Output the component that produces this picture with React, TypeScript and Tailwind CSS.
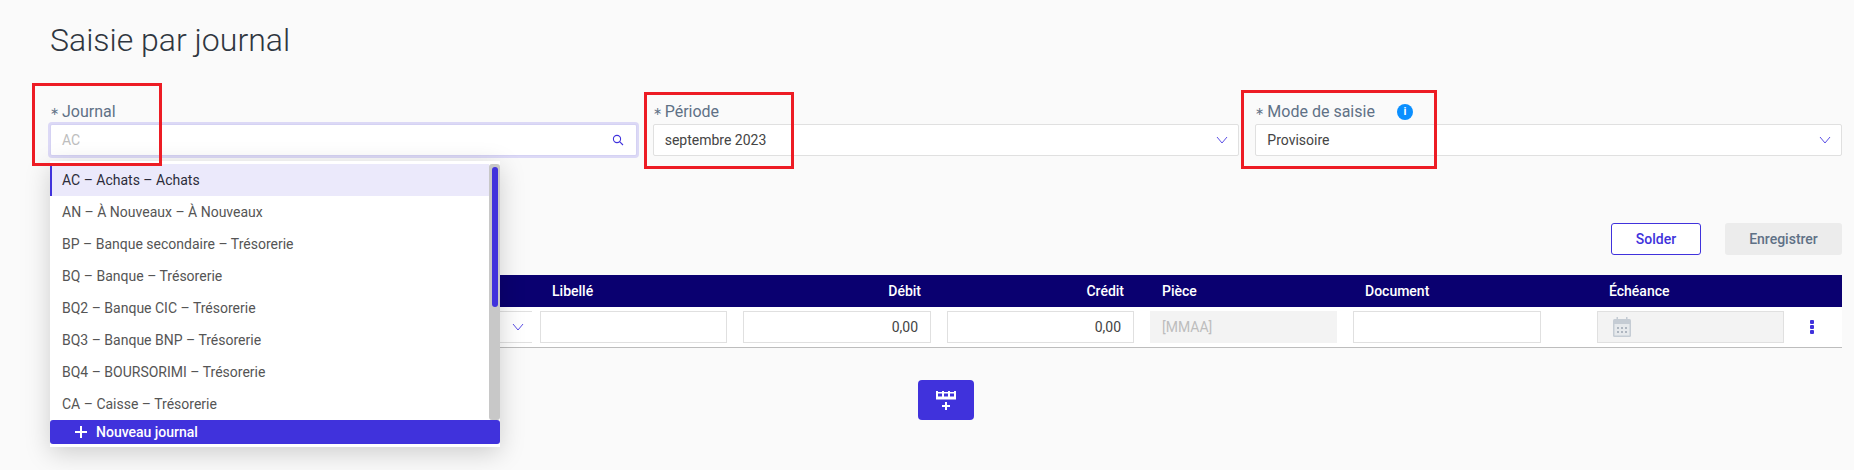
import React from "react";

const journals = [
  "AC – Achats – Achats",
  "AN – À Nouveaux – À Nouveaux",
  "BP – Banque secondaire – Trésorerie",
  "BQ – Banque – Trésorerie",
  "BQ2 – Banque CIC – Trésorerie",
  "BQ3 – Banque BNP – Trésorerie",
  "BQ4 – BOURSORIMI – Trésorerie",
  "CA – Caisse – Trésorerie",
];

const gridCols = "grid grid-cols-[482px_203px_204px_203px_203px_204px_40px_203px_1fr]";

function Chevron() {
  return (
    <svg width="12" height="8" viewBox="0 0 12 8" fill="none" stroke="#5b4fe6" strokeWidth="1">
      <path d="M1 1l5 6 5-6" />
    </svg>
  );
}

function SearchIcon() {
  return (
    <svg width="12" height="12" viewBox="0 0 12 12" fill="none" stroke="#4032dc" strokeWidth="1.1">
      <circle cx="5" cy="5" r="3.6" />
      <path d="M7.6 7.6L11 11" />
    </svg>
  );
}

function Label({ text }: { text: string }) {
  return (
    <div className="flex items-center h-6 text-[16px] text-[#5f7186]">
      <span className="w-3 text-[11px] text-[#5f7186]">∗</span>
      <span>{text}</span>
    </div>
  );
}

function SelectField({ label, value, info }: { label: string; value: string; info?: boolean }) {
  return (
    <div>
      <div className="flex items-center">
        <Label text={label} />
        {info && (
          <span className="ml-[22px] flex h-4 w-4 items-center justify-center rounded-full bg-[#0a8fff] text-[11px] font-bold text-white">
            i
          </span>
        )}
      </div>
      <div className="flex h-8 items-center justify-between rounded-[2px] border border-[#e0e0e0] bg-white pl-[11px] pr-[10px] text-[14px] text-[#444]">
        <span>{value}</span>
        <Chevron />
      </div>
    </div>
  );
}

function JournalField() {
  return (
    <div className="relative">
      <Label text="Journal" />
      <div className="flex h-8 items-center justify-between rounded-[2px] border border-[#d5d2f3] bg-white pl-[11px] pr-3 text-[14px] text-[#bdbdbd] ring-2 ring-[#dcd9f6]">
        <span>AC</span>
        <SearchIcon />
      </div>

      {/* dropdown */}
      <div className="absolute left-0 top-[61px] z-10 w-[450px] bg-white pt-[3px] pb-[3px] shadow-[0_6px_24px_rgba(0,0,0,0.18)]">
        <div className="flex">
          <div className="flex-1">
            {journals.map((j, i) => (
              <div
                key={j}
                className={
                  i === 0
                    ? "flex h-8 items-center border-l-2 border-[#4032dc] bg-[#ebe9fb] pl-[10px] text-[14px] text-[#2c2c3a]"
                    : "flex h-8 items-center pl-3 text-[14px] text-[#555]"
                }
              >
                {j}
              </div>
            ))}
          </div>
          <div className="flex h-64 w-[11px] justify-center rounded-[3px] bg-[#c8c8c8] pt-[3px]">
            <div className="h-[140px] w-[6px] rounded-[3px] bg-[#4032dc]" />
          </div>
        </div>
        <div className="flex h-6 items-center rounded-[3px] bg-[#4032dc] pl-6 text-[14px] font-medium text-white">
          <svg className="mr-2" width="14" height="14" viewBox="0 0 14 14" fill="none" stroke="white" strokeWidth="2">
            <path d="M7 1v12M1 7h12" />
          </svg>
          Nouveau journal
        </div>
      </div>
    </div>
  );
}

function CalendarIcon() {
  return (
    <svg width="18" height="20" viewBox="0 0 18 20">
      <rect x="3.5" y="0" width="1.5" height="3" fill="#c5ccd4" />
      <rect x="13" y="0" width="1.5" height="3" fill="#c5ccd4" />
      <rect x="0" y="2" width="18" height="18" rx="1.5" fill="#c5ccd4" />
      <rect x="1.5" y="7" width="15" height="11.5" fill="#e6e9ec" />
      <g fill="#aeb6c0">
        <rect x="4" y="10" width="2" height="2" />
        <rect x="8" y="10" width="2" height="2" />
        <rect x="12" y="10" width="2" height="2" />
        <rect x="4" y="14" width="2" height="2" />
        <rect x="8" y="14" width="2" height="2" />
        <rect x="12" y="14" width="2" height="2" />
      </g>
    </svg>
  );
}

function AddRowIcon() {
  return (
    <svg width="20" height="20" viewBox="0 0 20 20" fill="white">
      <g transform="translate(0 1)">
        <rect x="0" y="5.5" width="20" height="3" />
        <rect x="0" y="1" width="20" height="1.5" />
        <rect x="0" y="0" width="2" height="8" />
        <rect x="6" y="0" width="2" height="8" />
        <rect x="12" y="0" width="2" height="8" />
        <rect x="18" y="0" width="2" height="8" />
      </g>
      <path d="M9 12h2v3h3v2h-3v3H9v-3H6v-2h3z" />
    </svg>
  );
}

function RedBox({ className }: { className: string }) {
  return <div className={`pointer-events-none absolute z-20 border-[3px] border-[#ed1c24] ${className}`} />;
}

export default function App() {
  return (
    <div className="relative min-h-screen bg-[#fafafa] pl-[50px] pr-3 pt-5 font-[Roboto,sans-serif]">
      <h1 className="h-10 text-[32px] leading-10 font-light text-[#2f3640]">Saisie par journal</h1>

      <div className="mt-10 grid grid-cols-3 gap-4">
        <JournalField />
        <SelectField label="Période" value="septembre 2023" />
        <SelectField label="Mode de saisie" value="Provisoire" info />
      </div>

      <div className="mt-[67px] flex justify-end gap-6">
        <button className="h-8 w-[90px] rounded-[3px] border border-[#4032dc] bg-white text-[14px] font-medium text-[#4032dc]">
          Solder
        </button>
        <button className="h-8 w-[117px] rounded-[3px] bg-[#ececec] text-[14px] font-medium text-[#5f7186]">
          Enregistrer
        </button>
      </div>

      <div className="mt-5">
        <div className={`${gridCols} h-8 items-center bg-[#0a0070] text-[14px] font-medium text-white`}>
          <div />
          <div className="pl-5">Libellé</div>
          <div className="pr-[18px] text-right">Débit</div>
          <div className="pr-[18px] text-right">Crédit</div>
          <div className="pl-5">Pièce</div>
          <div className="pl-5">Document</div>
          <div />
          <div className="pl-5">Échéance</div>
          <div />
        </div>

        <div className={`${gridCols} h-[41px] items-center border-b border-[#bdbdbd] bg-white text-[14px] text-[#444]`}>
          <div className="flex h-8 items-center justify-end border-y border-[#e0e0e0] pr-2">
            <Chevron />
          </div>
          <div className="px-2">
            <div className="h-8 border border-[#e0e0e0] bg-white" />
          </div>
          <div className="px-2">
            <div className="flex h-8 items-center justify-end border border-[#e0e0e0] px-3">0,00</div>
          </div>
          <div className="px-2">
            <div className="flex h-8 items-center justify-end border border-[#e0e0e0] px-3">0,00</div>
          </div>
          <div className="px-2">
            <div className="flex h-8 items-center bg-[#f3f3f3] px-3 text-[#bdbdbd]">[MMAA]</div>
          </div>
          <div className="px-2">
            <div className="h-8 border border-[#e0e0e0] bg-white" />
          </div>
          <div />
          <div className="px-2">
            <div className="flex h-8 items-center border border-[#e0e0e0] bg-[#f3f3f3] pl-[15px]">
              <CalendarIcon />
            </div>
          </div>
          <div className="flex justify-center pr-[10px]">
            <div className="flex flex-col gap-px">
              <span className="h-1 w-1 rounded-[1px] bg-[#4032dc]" />
              <span className="h-1 w-1 rounded-[1px] bg-[#4032dc]" />
              <span className="h-1 w-1 rounded-[1px] bg-[#4032dc]" />
            </div>
          </div>
        </div>
      </div>

      <div className="mt-8 flex justify-center">
        <button className="flex h-10 w-14 items-center justify-center rounded-[4px] bg-[#4032dc]">
          <AddRowIcon />
        </button>
      </div>

      {/* annotations over the screenshot */}
      <RedBox className="left-[32px] top-[83px] h-[83px] w-[130px]" />
      <RedBox className="left-[644px] top-[92px] h-[77px] w-[150px]" />
      <RedBox className="left-[1241px] top-[90px] h-[79px] w-[196px]" />
    </div>
  );
}
